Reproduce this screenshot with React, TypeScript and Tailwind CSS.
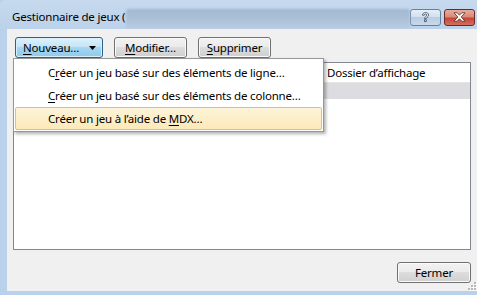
import React from "react";

const Btn = ({ children, className = "" }: { children: React.ReactNode; className?: string }) => (
  <div
    className={`h-[21px] flex items-center justify-center rounded-[3px] border border-[#707070] bg-[linear-gradient(#f2f2f2,#ebebeb_45%,#dddddd_50%,#cfcfcf)] shadow-[inset_0_0_0_1px_#fafafa] text-black whitespace-nowrap ${className}`}
  >
    {children}
  </div>
);

const MenuItem = ({ children, active = false }: { children: React.ReactNode; active?: boolean }) => (
  <div
    className={`h-[23px] flex items-center pl-[32px] rounded-[2px] border whitespace-nowrap ${
      active ? "border-[#e5c365] bg-[linear-gradient(#fdf4d9,#fce9b9)]" : "border-transparent"
    }`}
  >
    {children}
  </div>
);

export default function App() {
  return (
    <div className="relative w-[477px] h-[295px] overflow-hidden bg-[#b9d1ea] flex flex-col font-['Segoe_UI','Noto_Sans',sans-serif] text-[11.5px] tracking-[-0.2px] text-[#1a1a1a]">
      {/* title bar */}
      <div className="h-[29px] shrink-0 flex items-center pt-[5px] pl-[12px] pr-[2px] bg-[linear-gradient(#c6d9ee,#bcd2ea)] rounded-tl-[6px]">
        <span className="text-black whitespace-nowrap shrink-0">Gestionnaire de jeux (</span>
        <div className="ml-[1px] w-[284px] h-[20px] mt-[4px] shrink-0 rounded-[2px] bg-[linear-gradient(#a3b8d2,#aec2d9_60%,#bacce1)] blur-[1px]" />
        <div className="ml-auto flex items-center gap-[3px] shrink-0">
          <div className="w-[31px] h-[17px] rounded-[3px] border border-[#6a7f98] bg-[linear-gradient(#e6eef8,#d3e0ef_45%,#b9cce2_50%,#c9d9ec)] flex items-center justify-center">
            <svg width="9" height="11" viewBox="0 0 9 11">
              <path
                d="M1.5 3.2 C1.5 1.4 3 0.6 4.6 0.6 C6.4 0.6 7.6 1.6 7.6 3 C7.6 4.3 6.6 4.9 5.8 5.4 C5.2 5.8 5.2 6.1 5.2 6.8 L3.6 6.8 C3.6 5.8 3.8 5.2 4.7 4.6 C5.5 4.1 5.9 3.8 5.9 3.1 C5.9 2.4 5.3 2 4.6 2 C3.8 2 3.2 2.5 3.2 3.3 Z M3.5 7.8 L5.3 7.8 L5.3 9.6 L3.5 9.6 Z"
                fill="#fff"
                stroke="#34445a"
                strokeWidth="0.8"
              />
            </svg>
          </div>
          <div className="w-[31px] h-[17px] rounded-[3px] border border-[#6b2a24] bg-[linear-gradient(#e9ab9d,#d98a7b_45%,#c64536_55%,#d2705e)] flex items-center justify-center">
            <svg width="13" height="10" viewBox="0 0 13 10">
              <path
                d="M1 0.8 L4.2 0.8 L6.5 3.2 L8.8 0.8 L12 0.8 L8.2 5 L12 9.2 L8.8 9.2 L6.5 6.8 L4.2 9.2 L1 9.2 L4.8 5 Z"
                fill="#fff"
                stroke="#5a2a24"
                strokeWidth="0.8"
              />
            </svg>
          </div>
        </div>
      </div>

      {/* client area */}
      <div className="relative flex-1 ml-[7px] bg-[#f0f0f0] flex flex-col">
        <div className="flex gap-[11px] pt-[8px] pl-[8px]">
          <div className="w-[88px] h-[21px] flex items-center rounded-[3px] border border-[#2c628b] bg-[linear-gradient(#e1f1fb,#c4e5f6_45%,#a6d6f1_50%,#8fcaeb)] shadow-[inset_0_0_0_1px_#d8eefa] pl-[7px] text-black whitespace-nowrap">
            <span>
              <u className="underline-offset-2">N</u>ouveau…
            </span>
            <svg className="ml-[10px]" width="7" height="4" viewBox="0 0 7 4">
              <path d="M0 0 L7 0 L3.5 4 Z" fill="#000" />
            </svg>
          </div>
          <Btn className="w-[73px]">
            <span>
              <u className="underline-offset-2">M</u>odifier…
            </span>
          </Btn>
          <Btn className="w-[73px]">
            <span>
              <u className="underline-offset-2">S</u>upprimer
            </span>
          </Btn>
        </div>

        {/* list view */}
        <div className="mt-[4px] ml-[6px] w-[458px] h-[188px] border border-[#828790] bg-white flex flex-col">
          <div className="h-[20px] flex border-b border-[#e5e5e5]">
            <div className="w-[309px] border-r border-[#e5e5e5]" />
            <div className="pl-[4px] flex items-center text-black whitespace-nowrap">Dossier d’affichage</div>
          </div>
          <div className="h-[16px] bg-[#dcdce1]" />
        </div>

        <div className="mt-[12px] self-end mr-[6px]">
          <Btn className="w-[74px]">Fermer</Btn>
        </div>

        <svg className="absolute right-0 bottom-0" width="10" height="10" viewBox="0 0 10 10">
          {[
            [7, 1],
            [4, 4],
            [7, 4],
            [1, 7],
            [4, 7],
            [7, 7],
          ].map(([x, y]) => (
            <g key={`${x}-${y}`}>
              <rect x={x + 1} y={y + 1} width="2" height="2" fill="#fff" />
              <rect x={x} y={y} width="2" height="2" fill="#b8b8b8" />
            </g>
          ))}
        </svg>
      </div>
      <div className="h-[4px] shrink-0" />

      {/* dropdown menu */}
      <div className="absolute left-[13px] top-[58px] w-[311px] h-[74px] border border-[#979797] bg-white p-[1px] pt-[2px] shadow-[2px_2px_3px_rgba(0,0,0,0.3)] text-black">
        <MenuItem>
          <span>
            C<u className="underline-offset-2">r</u>éer un jeu basé sur des éléments de ligne…
          </span>
        </MenuItem>
        <MenuItem>
          <span>
            <u className="underline-offset-2">C</u>réer un jeu basé sur des éléments de colonne…
          </span>
        </MenuItem>
        <MenuItem active>
          <span>
            Créer un jeu à l’aide de <u className="underline-offset-2">M</u>DX…
          </span>
        </MenuItem>
      </div>
    </div>
  );
}
